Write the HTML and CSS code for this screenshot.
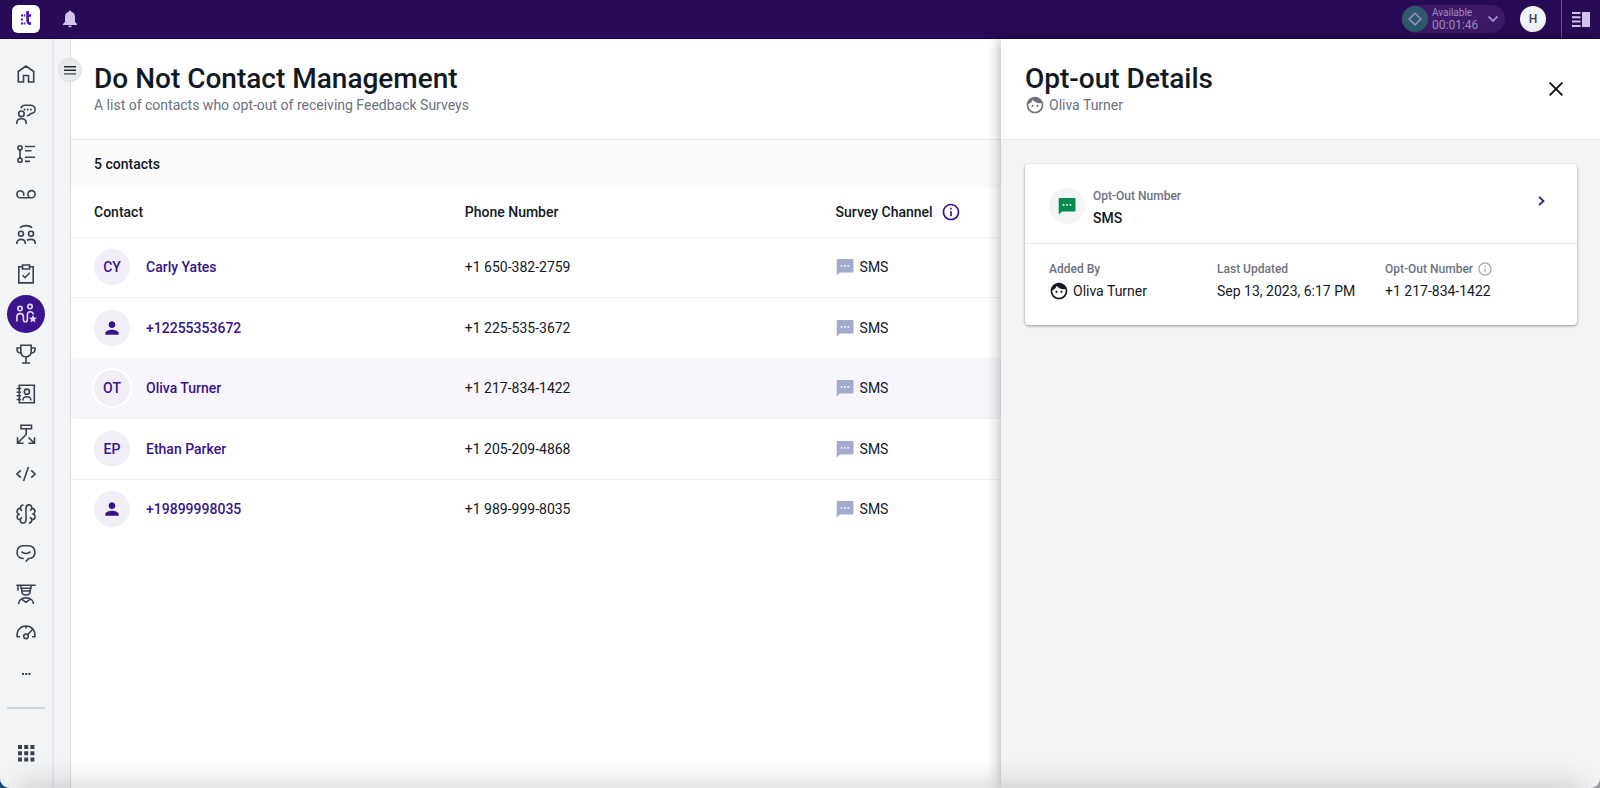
FILE: index.html
```
<!DOCTYPE html>
<html lang="en">
<head>
    <meta charset="UTF-8">
    <meta name="viewport" content="width=device-width, initial-scale=1.0">
    <title>Do Not Contact Management</title>
    <link rel="stylesheet" href="styles.css">
</head>
<body>
    <!-- Shared icons -->
    <svg class="sprite" aria-hidden="true">
        <symbol id="chat" viewBox="0 0 18 18">
            <path fill="currentColor" d="M1.500 1H16.500a1 1 0 0 1 1 1V13.500a1 1 0 0 1-1 1H4L.7 17.500V2a1 1 0 0 1 .8-1z"/>
            <path fill="#fff" fill-opacity="0.85" d="M4.700 7h1.800v1.800H4.700zM8.100 7h1.800v1.800H8.100zM11.500 7h1.800v1.800h-1.800z"/>
        </symbol>
        <symbol id="face" viewBox="0 0 24 24">
            <path fill="currentColor" d="M9 11.750c-.69 0-1.250.56-1.250 1.250s.56 1.250 1.250 1.250 1.250-.56 1.250-1.250-.56-1.250-1.250-1.250zm6 0c-.69 0-1.250.56-1.250 1.250s.56 1.250 1.250 1.250 1.250-.56 1.250-1.250-.56-1.250-1.250-1.250zM12 2C6.480 2 2 6.480 2 12s4.480 10 10 10 10-4.480 10-10S17.520 2 12 2zm0 18c-4.410 0-8-3.590-8-8 0-.29.02-.58.05-.86 2.360-1.050 4.230-2.980 5.210-5.370C11.070 8.330 14.050 10 17.420 10c.78 0 1.530-.09 2.250-.26.21.71.33 1.470.33 2.260 0 4.410-3.590 8-8 8z"/>
        </symbol>
        <symbol id="info" viewBox="0 0 24 24">
            <path fill="currentColor" d="M11 7h2v2h-2zm0 4h2v6h-2zm1-9C6.480 2 2 6.480 2 12s4.480 10 10 10 10-4.480 10-10S17.520 2 12 2zm0 18c-4.410 0-8-3.590-8-8s3.590-8 8-8 8 3.590 8 8-3.590 8-8 8z"/>
        </symbol>
        <symbol id="person" viewBox="0 0 24 24">
            <path fill="currentColor" d="M12 12c2.210 0 4-1.790 4-4s-1.790-4-4-4-4 1.790-4 4 1.790 4 4 4zm0 2c-2.670 0-8 1.340-8 4v2h16v-2c0-2.660-5.330-4-8-4z"/>
        </symbol>
    </svg>

    <div class="app">
        <header class="topbar">
            <a href="#" class="logo" aria-label="Home">
                <svg width="28" height="28" viewBox="0 0 28 28">
                    <path fill="#4b0fb5" d="M9 9.500h2v2H9zM9 13.500h2v2H9zM9 17.500h2v2H9zM11.700 9.500h1.600v2h-1.600zM11.700 17.500h1.600v2h-1.600z"/>
                    <path fill="none" stroke="#4b0fb5" stroke-width="2.600" d="M15.600 6v9.500q0 3.300 3.500 3.100M14.300 10.500h4.800"/>
                </svg>
            </a>
            <button class="icon-btn bell" aria-label="Notifications">
                <svg width="16" height="18" viewBox="0 0 16 18">
                    <path fill="#d3c4ee" d="M8 0.500a1.200 1.200 0 0 1 1.200 1.300C11.700 2.400 13 4.400 13 7v5l2 2v1H1v-1l2-2V7c0-2.600 1.300-4.600 3.800-5.200A1.200 1.200 0 0 1 8 .5zM6.300 15.800h3.400a1.700 1.500 0 0 1-3.400 0z"/>
                </svg>
            </button>
            <button class="status">
                <span class="status-dot">
                    <svg width="14" height="14" viewBox="0 0 14 14"><path fill="none" stroke="#9d8cc0" stroke-width="1.600" d="M7 1.200 12.800 7 7 12.800 1.200 7z"/></svg>
                </span>
                <span class="status-text">
                    <span class="status-name">Available</span>
                    <span class="status-time">00:01:46</span>
                </span>
                <svg width="12" height="8" viewBox="0 0 12 8"><path fill="none" stroke="#9d8cc0" stroke-width="1.800" d="M1.500 1.500 6 6l4.500-4.500"/></svg>
            </button>
            <button class="user">H</button>
            <button class="icon-btn layout-btn" aria-label="Toggle layout">
                <svg width="18" height="15" viewBox="0 0 18 15"><path fill="#d3c4ee" d="M0 0h8.500v2H0zM0 4.300h8.500v2H0zM0 8.600h8.500v2H0zM0 13h8.500v2H0zM10 0h8v15h-8z"/></svg>
            </button>
        </header>

        <div class="body">
            <nav class="sidebar">
                <a href="#" aria-label="Home"><svg viewBox="0 0 20 20"><path d="M2.300 18V7.500L10 2l7.700 5.500V18H12.500v-6.500h-5V18z"/></svg></a>
                <a href="#" aria-label="Conversations"><svg viewBox="0 0 20 20"><circle cx="5.400" cy="9.800" r="2.800"/><path d="M.8 20v-1c0-2.500 2-4.200 4.700-4.200s4.700 1.700 4.700 4.200v1M5 4.300C5.500 2.200 7 1.200 9 1.200h5.500c2.700 0 4.600 1.800 4.600 4.200S17.200 9.500 14.700 9.500c-1 1.500-2.200 2.200-3.900 2.300"/><path class="dots" d="M8.500 5.500h.1M11.700 5.500h.1M14.900 5.500h.1"/></svg></a>
                <a href="#" aria-label="Queues"><svg viewBox="0 0 20 20"><circle cx="4" cy="3.800" r="2.100"/><circle cx="4" cy="16.200" r="2.100"/><path d="M4 6v8M9 2.500h10M9 6.700h6.500M9 13.200h10M9 17.400h5"/></svg></a>
                <a href="#" aria-label="Voicemail"><svg viewBox="0 0 20 20"><path d="M7.500 11.800A3.500 3.500 0 1 0 4.500 13.800h11a3.600 3.600 0 1 0-3.600-3.600q0 2 1.500 3.300"/></svg></a>
                <a href="#" aria-label="Teams"><svg viewBox="0 0 20 20"><circle cx="5" cy="9.800" r="2.500"/><circle cx="15" cy="9.800" r="2.500"/><path d="M.8 20v-.8c0-2.200 1.800-3.800 4.200-3.800s4.200 1.600 4.200 3.800v.8M11 16.300c1-.6 2.300-.9 4-.9 2.400 0 4.200 1.600 4.200 3.800v.8M3.800 3.600q6.200-4 12.400 0"/></svg></a>
                <a href="#" aria-label="Tasks"><svg viewBox="0 0 20 20"><path d="M6.500 2.700H2.800v16.200h14.400V2.700h-3.700M6.500 1h7v4h-7zM6.500 11.200l2.500 2.500 4.800-5"/></svg></a>
                <a href="#" class="active" aria-label="Contact management"><svg viewBox="0 0 20 20"><circle cx="4" cy="4.600" r="2.200"/><circle cx="14" cy="2.600" r="2.200"/><path d="M.9 17.500v-4.700c0-1.900 1.400-3.200 3.300-3.200s3.200 1.300 3.200 3.200v2.700c0 1.400.9 2.300 2 2.300s2-.9 2-2.300v-4.800c0-1.800 1.200-3 2.900-3s2.900 1.200 2.900 2.800"/><path class="star" d="m17 10.800 1.200 2.600 2.800.3-2.100 1.900.6 2.800-2.500-1.400-2.500 1.400.6-2.800-2.100-1.900 2.800-.3z"/></svg></a>
                <a href="#" aria-label="Performance"><svg viewBox="0 0 20 20"><path d="M4.800 1.200h10.400V7c0 3.500-2 5.800-5.200 5.800S4.800 10.500 4.800 7zM4.800 4H1v1.500c0 2 1.400 3.500 4.200 3.700M15.200 4H19v1.500c0 2-1.400 3.500-4.200 3.700M10 12.800v6M6 19h8"/></svg></a>
                <a href="#" aria-label="Contacts"><svg viewBox="0 0 20 20"><path d="M3.300 1.200h15v17.600h-15zM.6 4.500h4.500M.6 8.200h4.500M.6 11.800h4.500M.6 15.500h4.500M7 16.500v-.6c0-1.900 1.600-3.100 3.900-3.100s3.900 1.200 3.900 3.100v.6"/><circle cx="10.900" cy="7.700" r="2.600"/></svg></a>
                <a href="#" aria-label="Routing"><svg viewBox="0 0 20 20"><path d="M5 1.200h10.500v3.600H5zM10.200 4.800v5.700L2 18.700M1.500 13.300v5.900h6M12.500 13.500l5.500 5.300M18.500 13.300v5.900h-6"/></svg></a>
                <a href="#" aria-label="Developers"><svg viewBox="0 0 20 20"><path d="M4.800 6.300.9 10l3.900 3.700M15.200 6.300l3.900 3.700-3.900 3.700M12.400 3 7.600 17"/></svg></a>
                <a href="#" aria-label="AI"><svg viewBox="0 0 20 20"><path d="M8 19c-2.500.3-4-1-3.700-3.300-2 .1-3.300-1.200-3.200-3 .1-1.200.8-2 1.700-2.400C1.300 9.500.8 8 1.200 6.600 1.700 5 3 4.200 4.400 4.500 4.400 2.200 5.600.9 7.500 1M10 15.500V4.300C10 2.200 11.200.9 13 .9s2.900 1.300 2.700 3.500c1.800 0 3 1 3.200 2.500.1 1.300-.5 2.400-1.700 3.100 1.300.6 1.900 1.600 1.800 2.900-.2 1.700-1.400 2.800-3.200 2.700 0 2.200-1.100 3.500-3 3.500M10 4.500v11c0 2-1 3.500-2.800 3.600M4.300 15.700c.1-1.100.8-2 1.800-2.300M15.700 15.600c-.1-1.200-.9-2-1.900-2.200M4.400 4.500c.2 1 .8 1.700 1.800 2M15.700 4.400c-.2 1.100-.9 1.800-1.900 2.100"/></svg></a>
                <a href="#" aria-label="Feedback"><svg viewBox="0 0 20 20"><path d="M7.800 14.500H7C3.500 14.500 1 12 1 8.300S3.500 1.800 7 1.800h6c3.500 0 6 2.800 6 6.500s-2.500 6.200-5.500 6.200h-1L9.800 17.800M5.500 7.700c2.500 2.400 6.500 2.400 9 0"/></svg></a>
                <a href="#" aria-label="Training"><svg viewBox="0 0 20 20"><path d="M.3 1.200h19.400M2 1.500v5M5 1.500v2.700h10V1.500M5.700 4.500V7c0 2.300 1.800 4 4.300 4s4.300-1.700 4.300-4V4.500M5.700 7h8.600M2.500 20c.2-3.500 3-6.100 7.500-6.100s7.300 2.600 7.500 6.100M5.300 14.800l4.700 3.500 4.700-3.500"/></svg></a>
                <a href="#" aria-label="Dashboards"><svg viewBox="0 2 20 20"><path d="M4 14.800H1.200C.2 8.500 4.600 4 10 4s9.800 4.500 8.800 10.800H16M11.500 12.700l4.800-5M10 4v2.500"/><circle cx="10" cy="14.300" r="2.300"/></svg></a>
                <a href="#" aria-label="More"><svg viewBox="0 0 20 20"><path class="more" d="M6 10h2M9.200 10h2M12.400 10h2"/></svg></a>
                <hr>
                <a href="#" class="apps" aria-label="Apps"><svg viewBox="0 0 20 20"><path class="grid" d="M2 2h4v4H2zM8.200 2h4v4h-4zM14.400 2h4v4h-4zM2 8.200h4v4H2zM8.200 8.200h4v4h-4zM14.400 8.200h4v4h-4zM2 14.400h4v4H2zM8.200 14.400h4v4h-4zM14.400 14.400h4v4h-4z"/></svg></a>
            </nav>

            <div class="gutter">
                <button class="menu-btn" aria-label="Open menu">
                    <svg width="12" height="9" viewBox="0 0 12 9"><path fill="#1f2a37" d="M0 0h12v1.500H0zM0 3.600h12v1.500H0z"/><path fill="#6b7280" d="M0 7h12v1.700H0z"/></svg>
                </button>
            </div>

            <main class="content">
                <div class="page-head">
                    <h1>Do Not Contact Management</h1>
                    <p>A list of contacts who opt-out of receiving Feedback Surveys</p>
                </div>
                <div class="count">5 contacts</div>
                <table>
                    <thead>
                        <tr>
                            <th>Contact</th>
                            <th>Phone Number</th>
                            <th><span class="with-icon header-icon">Survey Channel <svg class="info" width="20" height="20"><use href="#info"/></svg></span></th>
                        </tr>
                    </thead>
                    <tbody>
                        <tr>
                            <td><a href="#" class="contact"><span class="avatar">CY</span>Carly Yates</a></td>
                            <td>+1 650-382-2759</td>
                            <td><span class="with-icon"><svg class="chat" width="18" height="18"><use href="#chat"/></svg>SMS</span></td>
                        </tr>
                        <tr>
                            <td><a href="#" class="contact"><span class="avatar"><svg width="20" height="20"><use href="#person"/></svg></span>+12255353672</a></td>
                            <td>+1 225-535-3672</td>
                            <td><span class="with-icon"><svg class="chat" width="18" height="18"><use href="#chat"/></svg>SMS</span></td>
                        </tr>
                        <tr class="selected">
                            <td><a href="#" class="contact"><span class="avatar">OT</span>Oliva Turner</a></td>
                            <td>+1 217-834-1422</td>
                            <td><span class="with-icon"><svg class="chat" width="18" height="18"><use href="#chat"/></svg>SMS</span></td>
                        </tr>
                        <tr>
                            <td><a href="#" class="contact"><span class="avatar">EP</span>Ethan Parker</a></td>
                            <td>+1 205-209-4868</td>
                            <td><span class="with-icon"><svg class="chat" width="18" height="18"><use href="#chat"/></svg>SMS</span></td>
                        </tr>
                        <tr>
                            <td><a href="#" class="contact"><span class="avatar"><svg width="20" height="20"><use href="#person"/></svg></span>+19899998035</a></td>
                            <td>+1 989-999-8035</td>
                            <td><span class="with-icon"><svg class="chat" width="18" height="18"><use href="#chat"/></svg>SMS</span></td>
                        </tr>
                    </tbody>
                </table>
            </main>

            <aside class="panel">
                <div class="panel-head">
                    <div>
                        <h2>Opt-out Details</h2>
                        <p class="person"><svg width="20" height="20"><use href="#face"/></svg>Oliva Turner</p>
                    </div>
                    <button class="close" aria-label="Close">
                        <svg width="14" height="14" viewBox="0 0 14 14"><path fill="none" stroke="#0b0f17" stroke-width="1.900" d="m.7.7 12.600 12.600M13.300.7.7 13.300"/></svg>
                    </button>
                </div>
                <div class="card">
                    <div class="card-top">
                        <span class="channel"><svg width="18" height="18"><use href="#chat"/></svg></span>
                        <div class="channel-text">
                            <div class="label">Opt-Out Number</div>
                            <div class="channel-name">SMS</div>
                        </div>
                        <button class="open" aria-label="Open details">
                            <svg width="7" height="10" viewBox="0 0 7 10"><path fill="none" stroke="#38128b" stroke-width="1.800" d="m1 .8 4.500 4.200L1 9.200"/></svg>
                        </button>
                    </div>
                    <div class="card-info">
                        <div>
                            <div class="label">Added By</div>
                            <div class="person"><svg width="20" height="20"><use href="#face"/></svg>Oliva Turner</div>
                        </div>
                        <div>
                            <div class="label">Last Updated</div>
                            <div>Sep 13, 2023, 6:17 PM</div>
                        </div>
                        <div>
                            <div class="label">Opt-Out Number <svg width="16" height="16"><use href="#info"/></svg></div>
                            <div>+1 217-834-1422</div>
                        </div>
                    </div>
                </div>
            </aside>
        </div>
    </div>
</body>
</html>
```
FILE: styles.css
```
* {
    box-sizing: border-box;
}
body {
    font-family: Roboto, "Liberation Sans", sans-serif;
    font-size: 14px;
    line-height: 20px;
    margin: 0;
    color: #111923;
    background: linear-gradient(90deg, #174a7c 50%, #9a9b9e 50%);
}
h1, h2, p {
    margin: 0;
}
h1, h2 {
    font-size: 28px;
    line-height: 32px;
    font-weight: 500;
}
a {
    color: inherit;
    text-decoration: none;
}
button {
    font: inherit;
    border: 0;
    padding: 0;
    background: none;
    cursor: pointer;
}
svg {
    display: block;
    flex-shrink: 0;
}
.sprite {
    display: none;
}
.app {
    display: flex;
    flex-direction: column;
    height: 100vh;
    overflow: hidden;
    position: relative;
    background: #fff;
    border-radius: 0 0 10px 10px;
}
/* soft shade along the window's bottom edge */
.app::after {
    content: "";
    position: absolute;
    left: 20px;
    right: 20px;
    bottom: -20px;
    height: 20px;
    box-shadow: 0 0 30px rgba(0, 0, 0, 0.25);
    pointer-events: none;
}

/* Top bar */
.topbar {
    display: flex;
    align-items: center;
    flex-shrink: 0;
    height: 39px;
    padding-left: 12px;
    background: #270b57;
    border-bottom: 1px solid #16033f;
}
.logo {
    background: #fff;
    border-radius: 6px;
}
.bell {
    margin-left: 22px;
}
.status {
    display: flex;
    align-items: center;
    gap: 4px;
    margin-left: auto;
    padding-right: 6px;
    height: 28px;
    border-radius: 14px;
    background: #3c1a68;
    color: #9d8cc0;
    text-align: left;
}
.status-dot {
    display: grid;
    place-items: center;
    width: 26px;
    height: 26px;
    border-radius: 50%;
    background: #2c5a6c;
}
.status-text {
    width: 51px;
}
.status-name, .status-time {
    display: block;
    font-size: 10px;
    line-height: 12px;
}
.status-time {
    font-size: 12px;
}
.user {
    width: 26px;
    height: 26px;
    margin: 0 15px;
    border-radius: 50%;
    background: #f3f4f6;
    color: #374151;
    font-size: 12px;
    font-weight: 500;
}
.layout-btn {
    align-self: stretch;
    padding: 0 10px;
    border-left: 1px solid #6b5694;
}

/* Sidebar */
.body {
    display: flex;
    flex: 1;
    min-height: 0;
    position: relative;
}
.sidebar {
    display: flex;
    flex-direction: column;
    align-items: center;
    width: 54px;
    padding-top: 16px;
    background: #f3f4f6;
    border-right: 2px solid #e5e7eb;
}
.sidebar a {
    display: grid;
    place-items: center;
    width: 38px;
    height: 38px;
    margin-bottom: 2px;
    border-radius: 50%;
    color: #36424f;
}
.sidebar svg {
    width: 20px;
    height: 20px;
    overflow: visible;
    fill: none;
    stroke: currentColor;
    stroke-width: 1.6;
}
.sidebar .dots {
    stroke-width: 1.8;
    stroke-linecap: round;
}
.sidebar .more {
    stroke-width: 2;
}
.sidebar .star, .sidebar .grid {
    fill: currentColor;
    stroke: none;
}
.sidebar .active {
    background: #3b138c;
    color: #e3d8f5;
}
.sidebar hr {
    width: 38px;
    margin: 12px 0 25px;
    border: 0;
    border-top: 2px solid #d1d5db;
}
.gutter {
    width: 17px;
    padding-top: 19px;
    background: #f3f4f6;
    border-right: 1px solid #d8dce2;
}
.menu-btn {
    display: grid;
    place-items: center;
    position: relative;
    width: 24px;
    height: 24px;
    margin-left: 4px;
    border: 1px solid #dedfe2;
    border-radius: 50%;
    background: #e9eaec;
}

/* Contact list */
.content {
    flex: 1;
    min-width: 0;
}
.page-head {
    height: 101px;
    padding: 24px 23px 0;
    border-bottom: 1px solid #e5e7eb;
}
.page-head p, .panel-head p {
    color: #6b7280;
}
.count {
    padding: 14px 23px;
    background: #fafafa;
    font-weight: 500;
}
table {
    width: 100%;
    table-layout: fixed;
    border-collapse: collapse;
}
th, td {
    height: 60px;
    padding: 0 23px;
    border-bottom: 1px solid #f1f2f4;
    text-align: left;
}
tbody tr:nth-child(even) td {
    height: 61px;
}
th {
    width: 24.25%;
    height: 49px;
    font-weight: 500;
}
th:last-child {
    width: auto;
}
tbody tr:last-child td {
    border-bottom: 0;
}
.selected {
    background: #f8f5fc;
}
.contact {
    display: flex;
    align-items: center;
    gap: 16px;
    color: #38128b;
    font-weight: 500;
}
.avatar {
    display: grid;
    place-items: center;
    width: 36px;
    height: 36px;
    border-radius: 50%;
    background: #f1eef8;
}
.selected .avatar {
    box-shadow: 0 0 0 2px #fff;
}
.with-icon {
    display: flex;
    align-items: center;
    gap: 6px;
}
.header-icon {
    gap: 8px;
}
.info {
    color: #38128b;
}
.chat {
    color: #a2abcd;
}

/* Details panel slides over the list */
.panel {
    position: absolute;
    top: 0;
    right: 0;
    bottom: 0;
    width: 599px;
    background: #f3f4f6;
    box-shadow: 0 0 14px rgba(0, 0, 0, 0.35);
}
.panel-head {
    display: flex;
    justify-content: space-between;
    height: 101px;
    padding: 24px 37px 0 24px;
    background: #fff;
    border-bottom: 1px solid #e5e7eb;
}
.person {
    display: flex;
    align-items: center;
    gap: 4px;
}
.close {
    align-self: flex-start;
    margin-top: 19px;
}
.card {
    margin: 24px 23px 24px 24px;
    background: #fff;
    border-radius: 4px;
    box-shadow: 0 1px 3px rgba(0, 0, 0, 0.4);
}
.card-top {
    display: flex;
    padding: 21px 32px 15px 24px;
    border-bottom: 1px solid #e5e7eb;
}
.channel {
    display: grid;
    place-items: center;
    width: 36px;
    height: 36px;
    margin: 3px 8px 0 0;
    border-radius: 50%;
    background: #f3f4f6;
    color: #068a4e;
}
.channel-text {
    flex: 1;
}
.channel-name {
    font-weight: 500;
}
.open {
    align-self: flex-start;
    margin-top: 11px;
}
.label {
    display: flex;
    align-items: center;
    gap: 4px;
    height: 22px;
    margin-bottom: 1px;
    color: #6b7280;
    font-size: 12px;
    font-weight: 500;
}
.label svg {
    color: #a8adb5;
}
.card-info {
    display: grid;
    grid-template-columns: repeat(3, 1fr);
    padding: 14px 24px 24px;
}
```
